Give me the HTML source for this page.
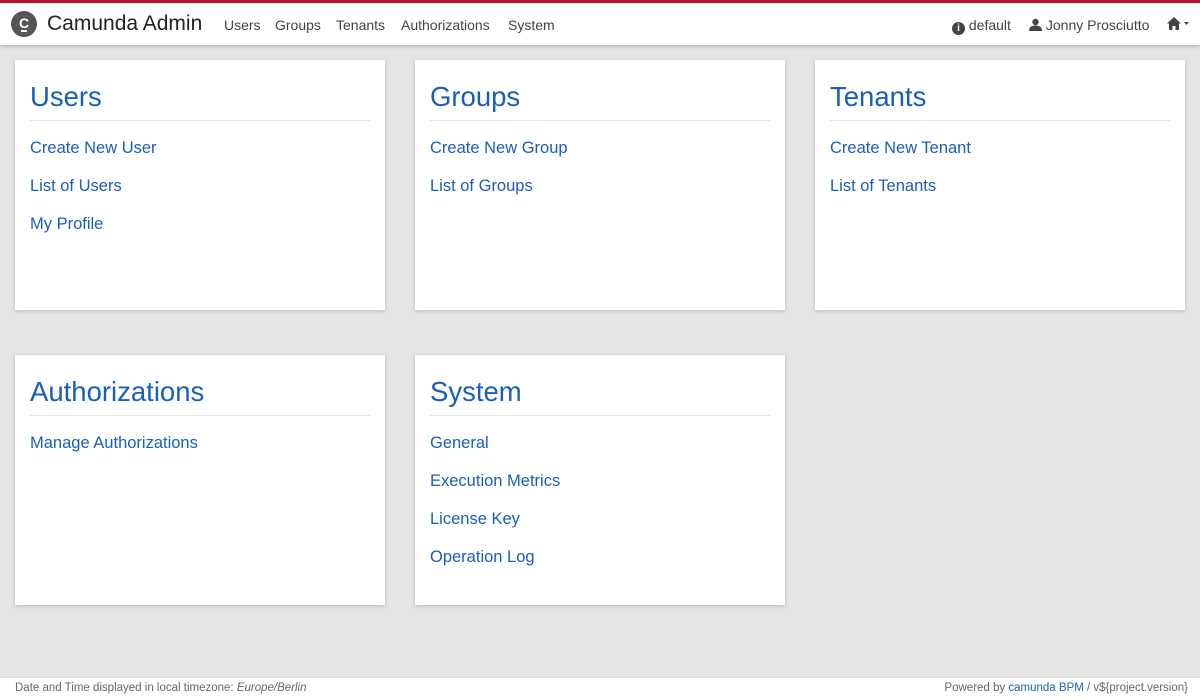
<!DOCTYPE html>
<html><head><meta charset="utf-8"><style>
*{box-sizing:border-box;margin:0;padding:0}
body{width:1200px;height:700px;overflow:hidden;background:#e5e5e5;font-family:"Liberation Sans",sans-serif;position:relative}
.top{position:absolute;left:0;top:0;width:1200px;height:45px;background:#fff;border-top:3px solid #b5152b;box-shadow:0 1px 4px rgba(0,0,0,.25)}
.logo{position:absolute;left:11px;top:8px;width:26px;height:26px;border-radius:50%;background:#555;color:#fff;font-weight:bold;font-size:14px;text-align:center;line-height:24px}
.logo:after{content:"";position:absolute;left:10px;top:19px;width:6px;height:2px;background:#fff}
.brand{position:absolute;left:47px;top:9px;font-size:21px;color:#222}
.nav{position:absolute;top:14px;font-size:14px;color:#444}
.card{position:absolute;width:370px;height:250px;background:#fff;box-shadow:0 1px 4px rgba(0,0,0,.2);padding:0 15px}
.card h2{font-weight:normal;font-size:27.5px;color:#1a5eb8;margin-top:19px;height:42px;border-bottom:1px solid #e5e5e5;line-height:35px}
.card a{display:block;font-size:16.5px;color:#1a5eb8;text-decoration:none;height:38px;line-height:38px}
.card .l{margin-top:8px}
.foot{position:absolute;left:0;top:677px;width:1200px;height:23px;background:#fff;border-top:1px solid #ddd;font-size:11.5px;color:#666;padding:4px 15px}
</style></head><body>
<div class="top">
<div class="logo">C</div>
<div class="brand">Camunda Admin</div>
<div class="nav" style="left:224px">Users</div>
<div class="nav" style="left:275px">Groups</div>
<div class="nav" style="left:336px">Tenants</div>
<div class="nav" style="left:401px">Authorizations</div>
<div class="nav" style="left:508px">System</div>
<div class="nav" style="left:952px"><span style="display:inline-block;width:13px;height:13px;border-radius:50%;background:#444;color:#fff;font-size:10px;font-weight:bold;text-align:center;line-height:13px;vertical-align:-1px">i</span> default</div>
<div class="nav" style="left:1029px"><svg width="13" height="13" viewBox="0 0 13 13" style="vertical-align:-1px"><circle cx="6.5" cy="4" r="3.2" fill="#444"/><path d="M0 13 Q0 7.5 6.5 7.5 Q13 7.5 13 13Z" fill="#444"/></svg> Jonny Prosciutto</div>
<div class="nav" style="left:1167px"><svg width="22" height="13" viewBox="0 0 22 13"><path d="M7 0 L14 6.5 H12 V13 H8.5 V9 H5.5 V13 H2 V6.5 H0Z" fill="#444"/><path d="M17 5 H22 L19.5 8Z" fill="#444"/></svg></div>
</div>
<div class="card" style="left:15px;top:60px"><h2>Users</h2><div class="l"><a>Create New User</a><a>List of Users</a><a>My Profile</a></div></div>
<div class="card" style="left:415px;top:60px"><h2>Groups</h2><div class="l"><a>Create New Group</a><a>List of Groups</a></div></div>
<div class="card" style="left:815px;top:60px"><h2>Tenants</h2><div class="l"><a>Create New Tenant</a><a>List of Tenants</a></div></div>
<div class="card" style="left:15px;top:355px"><h2>Authorizations</h2><div class="l"><a>Manage Authorizations</a></div></div>
<div class="card" style="left:415px;top:355px"><h2>System</h2><div class="l"><a>General</a><a>Execution Metrics</a><a>License Key</a><a>Operation Log</a></div></div>
<div class="foot"><span>Date and Time displayed in local timezone: <i>Europe/Berlin</i></span><span style="position:absolute;right:12px;top:4px">Powered by <span style="color:#1a5eb8">camunda BPM</span> / v${project.version}</span></div>
</body></html>
